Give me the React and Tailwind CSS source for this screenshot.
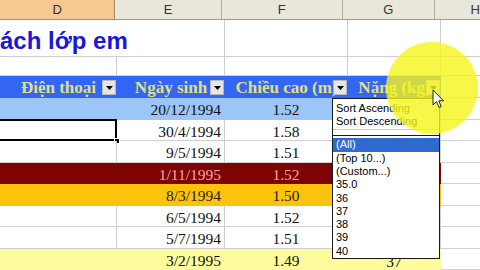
import React from 'react';

const GRID = 'border-[#cfcfcf]';

const COLS = [
  { key: 'D', w: 'w-[117px]' },
  { key: 'E', w: 'w-[108px]' },
  { key: 'F', w: 'w-[123px]' },
  { key: 'G', w: 'w-[93px]' },
];

// weight column is hidden under the filter list except on the last row
const ROWS = [
  { date: '20/12/1994', h: '1.52', kg: '', bg: 'bg-[#9cc6f8]', text: 'text-[#111]' },
  { date: '30/4/1994', h: '1.58', kg: '', bg: '', text: 'text-[#111]', active: true },
  { date: '9/5/1994', h: '1.51', kg: '', bg: '', text: 'text-[#111]' },
  { date: '1/11/1995', h: '1.52', kg: '', bg: 'bg-[#7e0303]', text: 'text-[#f4a6a6]' },
  { date: '8/3/1994', h: '1.50', kg: '', bg: 'bg-[#fdc20c]', text: 'text-[#2a2200]' },
  { date: '6/5/1994', h: '1.52', kg: '', bg: '', text: 'text-[#111]' },
  { date: '5/7/1994', h: '1.51', kg: '', bg: '', text: 'text-[#111]' },
  { date: '3/2/1995', h: '1.49', kg: '37', bg: 'bg-[#fdfc9c]', text: 'text-[#111]' },
];

const HEADERS = ['Điện thoại', 'Ngày sinh', 'Chiều cao (m)', 'Nặng (kg)'];

const LIST = ['(All)', '(Top 10...)', '(Custom...)', '35.0', '36', '37', '38', '39', '40'];

function FilterButton() {
  return (
    <span className="absolute right-[1px] top-[4px] w-[14px] h-[15px] bg-[#e6e6e6] border border-[#b9b9b9] flex items-center justify-center">
      <svg width="7" height="4" viewBox="0 0 7 4">
        <path d="M0 0 L7 0 L3.5 4 Z" fill="#000" />
      </svg>
    </span>
  );
}

function ColumnHeaders() {
  return (
    <div className="flex h-[20px] text-[13px] text-[#333] font-['Liberation_Sans',Arial,sans-serif]">
      {COLS.map((c) => (
        <div
          key={c.key}
          className={`${c.w} h-full flex items-center justify-center border-r border-b ${
            c.key === 'D'
              ? 'bg-[#f7c891] border-r-[#a98a5e] border-b-[#c0894a]'
              : 'bg-[#e9e6dc] border-r-[#b1ac9b] border-b-[#9d9a8c]'
          }`}
        >
          {c.key}
        </div>
      ))}
      <div className="flex-1 h-full bg-[#e9e6dc] border-b border-[#9d9a8c] pl-[36px] flex items-center">H</div>
    </div>
  );
}

function DataRow({ row }) {
  const filled = row.bg !== '';
  const cell = `h-full border-r border-b ${filled ? `${row.bg} border-transparent` : `bg-white ${GRID}`}`;
  return (
    <div className={`flex h-[21.5px] text-[15.5px] leading-none font-['Liberation_Serif','Times_New_Roman',serif] ${row.text}`}>
      <div className={`${COLS[0].w} ${cell} relative`}>
        {row.active && (
          <>
            <div className="absolute -left-[3px] -top-[1px] right-[-1px] bottom-[-1px] border-2 border-black" />
            <div className="absolute right-[-4px] bottom-[-4px] w-[6px] h-[6px] bg-black border border-white" />
          </>
        )}
      </div>
      <div className={`${COLS[1].w} ${cell} flex items-end justify-end pr-[3px] pb-[1px]`}>{row.date}</div>
      <div className={`${COLS[2].w} ${cell} flex items-end justify-center pb-[1px]`}>{row.h}</div>
      <div className={`${COLS[3].w} ${cell} flex items-end justify-center pb-0`}>{row.kg}</div>
      <div className={`flex-1 h-full bg-white border-b ${GRID}`} />
    </div>
  );
}

function FilterMenu() {
  return (
    <div className="absolute left-[332px] top-[98px] w-[108px] h-[161px] bg-white border border-[#1a1a1a] font-['Liberation_Sans',Tahoma,sans-serif] text-[11px] text-black flex flex-col">
      <div className="pt-[3px] pl-[3px] leading-[13px] border-b border-[#c9c9c9] h-[33px]">
        <div>Sort Ascending</div>
        <div>Sort Descending</div>
      </div>
      <div className="mt-[5px] border-t border-[#1a1a1a] pt-[2px] flex flex-col">
        {LIST.map((item, i) => (
          <div
            key={item}
            className={`h-[13.3px] leading-[13.3px] pl-[3px] ${i === 0 ? 'bg-[#2f6ad0] text-white' : ''}`}
          >
            {item}
          </div>
        ))}
      </div>
    </div>
  );
}

export default function App() {
  return (
    <div className="relative w-[480px] h-[270px] overflow-hidden bg-white">
      <ColumnHeaders />

      {/* title row */}
      <div className="flex h-[37px]">
        <div className="w-[225px] h-full border-b border-r border-[#cfcfcf] flex items-end pb-[3px] overflow-visible">
          <span className="whitespace-nowrap text-[24px] leading-none font-bold text-[#1717d8] font-['Liberation_Sans',Arial,sans-serif]">
            ách lớp em
          </span>
        </div>
        <div className={`${COLS[2].w} h-full border-b border-r ${GRID}`} />
        <div className={`${COLS[3].w} h-full border-b border-r ${GRID}`} />
        <div className={`flex-1 h-full border-b ${GRID}`} />
      </div>

      {/* blank row */}
      <div className="flex h-[19px]">
        {COLS.map((c) => (
          <div key={c.key} className={`${c.w} h-full border-b border-r ${GRID}`} />
        ))}
        <div className={`flex-1 h-full border-b ${GRID}`} />
      </div>

      {/* table header */}
      <div className="flex h-[22px] font-['Liberation_Serif','Times_New_Roman',serif] font-bold text-[17px] leading-none text-[#e2e07c]">
        {COLS.map((c, i) => (
          <div
            key={c.key}
            className={`${c.w} h-full relative bg-[#3466f4] flex items-end justify-center pb-[2px] whitespace-nowrap overflow-hidden`}
          >
            {HEADERS[i]}
            <FilterButton />
          </div>
        ))}
        <div className={`flex-1 h-full bg-white border-b ${GRID}`} />
      </div>

      {ROWS.map((row, i) => (
        <DataRow key={i} row={row} />
      ))}

      <FilterMenu />

      {/* cursor highlight */}
      <div className="absolute left-[386px] top-[42px] w-[92px] h-[92px] rounded-full bg-[#f5f51a]/80" />

      <svg className="absolute left-[432px] top-[89px]" width="13" height="21" viewBox="0 0 13 21">
        <path d="M1 1 L1 16 L4.5 12.5 L7 18.5 L9.2 17.6 L6.8 11.8 L11.5 11.8 Z" fill="#fff" stroke="#222" strokeWidth="1" strokeLinejoin="round" />
      </svg>
    </div>
  );
}
